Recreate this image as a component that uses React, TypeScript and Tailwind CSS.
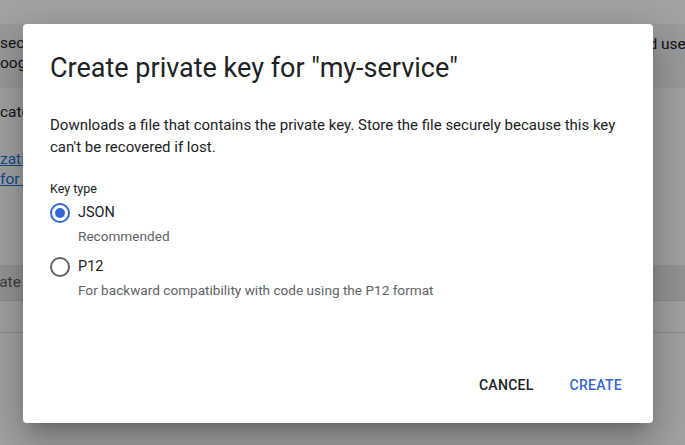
import React from 'react';

// Radio option in the key type group
const RadioOption: React.FC<{ label: string; hint: string; checked?: boolean }> = ({
  label,
  hint,
  checked = false,
}) => (
  <div className="flex flex-col">
    <div className="flex items-center h-[24px]">
      <span
        className={`w-[20px] h-[20px] rounded-full border-2 flex items-center justify-center ${
          checked ? 'border-[#3367d6]' : 'border-[#5f6368]'
        }`}
      >
        {checked && <span className="w-[10px] h-[10px] rounded-full bg-[#3367d6]" />}
      </span>
      <span className="ml-[8px] text-[14.5px] text-[#202124]">{label}</span>
    </div>
    <div className="pl-[28px] mt-[1px] text-[13.6px] leading-[20px] text-[#5f6368]">{hint}</div>
  </div>
);

export default function App() {
  return (
    <div
      className="relative w-[685px] h-[445px] overflow-hidden bg-white text-[#202124]"
      style={{ fontFamily: 'Roboto, "Noto Sans", sans-serif' }}
    >
      {/* page behind the dialog */}
      <div className="flex flex-col text-[15.5px] whitespace-nowrap">
        <div className="h-[24px]" />
        <div className="h-[64px] bg-[#f1f3f4] flex justify-between pt-[9px]">
          <div className="flex flex-col leading-[20px]">
            <span>secu</span>
            <span>oogl</span>
          </div>
          <span className="-mr-[14px]">ed users</span>
        </div>
        <div className="pt-[14px] leading-[20px]">cate</div>
        <div className="pt-[27px] flex flex-col items-start leading-[20px] text-[#1a73e8]">
          <span className="underline">zati</span>
          <span className="underline">for s</span>
        </div>
        <div className="h-[76px]" />
        <div className="h-[36px] bg-[#e8eaed] flex items-center border-b border-[#dadce0] text-[#5f6368]">
          <span className="-ml-[11px]">Date</span>
        </div>
        <div className="h-[32px] border-b border-[#dadce0]" />
      </div>

      {/* scrim */}
      <div className="absolute inset-0 bg-black/[0.36]" />

      {/* dialog */}
      <div className="absolute left-[23px] top-[24px] w-[630px] h-[399px] bg-white rounded-[4px] shadow-[0_11px_15px_-7px_rgba(0,0,0,0.2),0_24px_38px_3px_rgba(0,0,0,0.14),0_9px_46px_8px_rgba(0,0,0,0.12)] flex flex-col">
        <div className="px-[27px] pt-[28px]">
          <h2 className="text-[27px] leading-[32px] text-[#202124]">Create private key for "my-service"</h2>
          <p className="mt-[30px] text-[15px] leading-[22px] text-[#202124]">
            Downloads a file that contains the private key. Store the file securely because this key can't be recovered if
            lost.
          </p>
          <div className="mt-[23px] text-[12.5px] leading-[16px] text-[#202124]">Key type</div>
          <div className="mt-[4px] flex flex-col gap-[9px]">
            <RadioOption label="JSON" hint="Recommended" checked />
            <RadioOption label="P12" hint="For backward compatibility with code using the P12 format" />
          </div>
        </div>
        <div className="mt-auto flex justify-end gap-[4px] pr-[15px] pb-[20px]">
          <button className="px-[16px] h-[36px] text-[14px] font-medium tracking-[0.02em] uppercase text-[#202124]">
            Cancel
          </button>
          <button className="px-[16px] h-[36px] text-[14px] font-medium tracking-[0.02em] uppercase text-[#3367d6]">
            Create
          </button>
        </div>
      </div>
    </div>
  );
}
